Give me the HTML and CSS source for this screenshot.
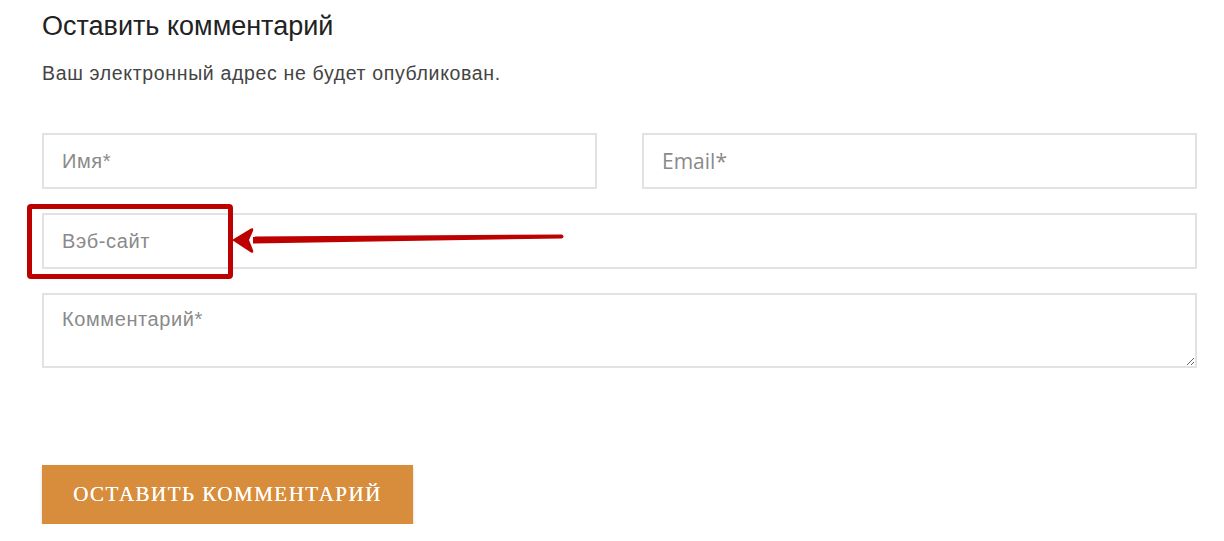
FILE: index.html
```html
<!DOCTYPE html>
<html lang="ru">
<head>
<meta charset="utf-8">
<title>Оставить комментарий</title>
<link rel="stylesheet" href="styles.css">
</head>
<body>
<div class="wrap">
  <h2 class="title">Оставить комментарий</h2>
  <p class="note">Ваш электронный адрес не будет опубликован.</p>
  <form class="form">
    <div class="row">
      <input class="field" type="text" placeholder="Имя*">
      <input class="field email" type="text" placeholder="Email*">
    </div>
    <input class="field" type="text" placeholder="Вэб-сайт">
    <textarea class="field area" placeholder="Комментарий*"></textarea>
    <div class="actions">
      <button class="submit" type="button">Оставить комментарий</button>
    </div>
  </form>
  <div class="mark"></div>
  <svg class="arrow" width="345" height="30" viewBox="0 0 345 30">
    <path d="M333 6.5 L24 8.5 L24 15.5 L333 10.5 Q336 8.5 333 6.5 Z" fill="#bd0000"/>
    <path d="M3 12 L22 0.5 Q25 -0.5 24 3 L20 12 L24 22 Q25 25.5 22 24.5 Z" fill="#bd0000"/>
  </svg>
</div>
</body>
</html>
```
FILE: styles.css
```css
html, body {
  margin: 0;
  padding: 0;
  background: #ffffff;
}
.wrap {
  position: relative;
  width: 1155px;
  padding-left: 42px;
  padding-top: 9px;
  font-family: "Liberation Sans", Arial, sans-serif;
}
.title {
  margin: 0;
  font-size: 27px;
  line-height: 34px;
  font-weight: normal;
  color: #222222;
}
.note {
  margin: 18px 0 0 0;
  font-size: 19.5px;
  line-height: 24px;
  letter-spacing: 0.66px;
  color: #444444;
}
.form {
  display: flex;
  flex-direction: column;
  gap: 24px;
  margin-top: 48px;
}
.row {
  display: flex;
  gap: 45px;
}
.field {
  box-sizing: border-box;
  width: 100%;
  height: 56px;
  margin: 0;
  border: 2px solid #e2e2e2;
  border-radius: 0;
  padding: 0 18px;
  font-family: "Liberation Sans", Arial, sans-serif;
  font-size: 20px;
  letter-spacing: 0.6px;
  color: #333;
  background: #fff;
  outline: none;
}
.field::placeholder {
  color: #8a8a8a;
}
.email {
  font-family: "Open Sans", "Liberation Sans", sans-serif;
  font-size: 21px;
  letter-spacing: 0;
}
.area {
  height: 75px;
  padding-top: 13px;
  resize: vertical;
  display: block;
}
.actions {
  padding-top: 73px;
}
.submit {
  width: 371px;
  height: 59px;
  border: none;
  background: #d88d3c;
  color: #ffffff;
  font-family: "Liberation Serif", "Times New Roman", serif;
  font-size: 21px;
  letter-spacing: 1.5px;
  text-transform: uppercase;
  text-shadow: 0 0 0.4px #ffffff;
  box-shadow: 0 2px 3px rgba(0,0,0,0.18);
  cursor: pointer;
}
.mark {
  position: absolute;
  left: 27px;
  top: 204px;
  width: 196px;
  height: 65px;
  border: 5px solid #bd0000;
  border-radius: 4px;
}
.arrow {
  position: absolute;
  left: 229px;
  top: 228px;
}
```
